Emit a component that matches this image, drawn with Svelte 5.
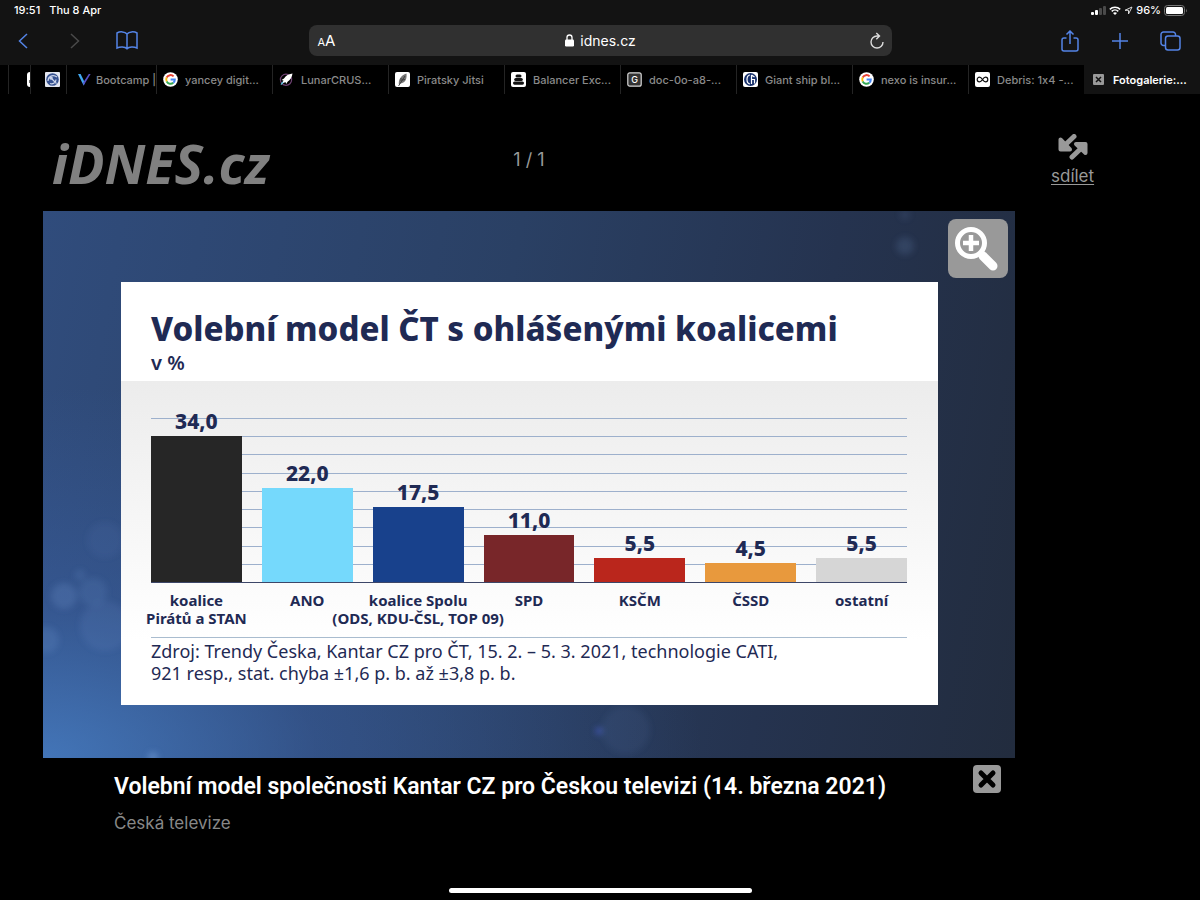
<script lang="ts">
interface Tab {
  icon: string;
  title: string;
  size?: 'sliver' | 'mini' | 'short';
  active?: boolean;
}

interface Party {
  name: string[];
  value: number;
  color: string;
}

const tabs: Tab[] = [
  { icon: 'blank', title: '', size: 'sliver' },
  { icon: 'globe', title: '', size: 'mini' },
  { icon: 'vee', title: 'Bootcamp |', size: 'short' },
  { icon: 'google', title: 'yancey digit...' },
  { icon: 'rocket', title: 'LunarCRUS...' },
  { icon: 'leaf', title: 'Piratsky Jitsi' },
  { icon: 'stack', title: 'Balancer Exc...' },
  { icon: 'letter', title: 'doc-0o-a8-...' },
  { icon: 'guardian', title: 'Giant ship bl...' },
  { icon: 'google', title: 'nexo is insur...' },
  { icon: 'infinity', title: 'Debris: 1x4 -...' },
  { icon: 'close', title: 'Fotogalerie:...', active: true },
];

const parties: Party[] = [
  { name: ['koalice', 'Pirátů a STAN'], value: 34, color: '#262626' },
  { name: ['ANO'], value: 22, color: '#75d9fc' },
  { name: ['koalice Spolu', '(ODS, KDU-ČSL, TOP 09)'], value: 17.5, color: '#18418c' },
  { name: ['SPD'], value: 11, color: '#782629' },
  { name: ['KSČM'], value: 5.5, color: '#ba261c' },
  { name: ['ČSSD'], value: 4.5, color: '#e8993d' },
  { name: ['ostatní'], value: 5.5, color: '#d6d6d6' },
];

const axisMax = 38.3;
const gridLines = 9;

let address = $state('idnes.cz');

const format = (value: number) => value.toFixed(1).replace('.', ',');
</script>

{#snippet favicon(name: string)}
  <svg class="favicon" viewBox="0 0 15 15" aria-hidden="true">
    {#if name === 'blank'}
      <rect width="15" height="15" rx="3" fill="#fff" />
      <path d="M3 8v3" stroke="#333" stroke-width="1.4" />
    {:else if name === 'globe'}
      <rect width="15" height="15" rx="1" fill="#e4e7f0" />
      <circle cx="7.5" cy="7.5" r="6.3" fill="#34508f" />
      <path d="M6 6l5.500 5.500M3 9c0-5 5-7 9-4M5 11.500c3 1 6-1 6-4" fill="none" stroke="#cdd6ea" stroke-width="1.2" />
      <circle cx="6" cy="6" r="1.8" fill="#c7d0e8" />
    {:else if name === 'vee'}
      <path d="M1 2l5.6 11.4L8 11 3.6 2z" fill="#41a8f0" />
      <path d="M6.6 13.4L13.6 2h-1.8L6.2 10.6z" fill="#5750c8" />
    {:else if name === 'google'}
      <circle cx="7.5" cy="7.5" r="7.3" fill="#fff" />
      <g fill="none" stroke-width="2">
        <path d="M10.6 4.4A4.3 4.3 0 0 0 3.7 5.5" stroke="#e84335" />
        <path d="M3.7 5.5a4.3 4.3 0 0 0 0 4" stroke="#fabb05" />
        <path d="M3.7 9.5a4.3 4.3 0 0 0 6.6 1.3" stroke="#34a853" />
        <path d="M10.3 10.8a4.3 4.3 0 0 0 1.5-3.3H7.6" stroke="#4285f4" />
      </g>
    {:else if name === 'rocket'}
      <circle cx="7" cy="7.8" r="5.6" fill="none" stroke="#704274" stroke-width="1.2" />
      <path d="M13.5 1.500C9 2 6.500 4 5 6.500L2.500 8l2 .5L2.500 12l4-2 .6 2L8.800 9.500C11 8 13 5.500 13.500 1.500z" fill="#fff" />
      <path d="M4 10L2 12.600" stroke="#54c0dd" stroke-width="1.3" />
    {:else if name === 'leaf'}
      <rect width="15" height="15" rx="2" fill="#fff" />
      <path d="M4 13C3 8 6 3 11.5 1.500c.5 5-.5 9-6 10z" fill="#777" />
      <path d="M3.500 14L10 4M6 9V6M7 8l3-.5" stroke="#333" stroke-width=".8" />
    {:else if name === 'stack'}
      <rect width="15" height="15" rx="2" fill="#fff" />
      <rect x="4.500" y="2.600" width="6" height="3" rx="1.500" fill="#111" />
      <rect x="3.200" y="6" width="8.600" height="3" rx="1.500" fill="#111" />
      <rect x="2" y="9.500" width="11" height="3.200" rx="1.600" fill="#111" />
    {:else if name === 'letter'}
      <rect x=".8" y=".8" width="13.400" height="13.400" rx="2" fill="#333" stroke="#d8d8d8" stroke-width="1.200" />
      <text class="favicon-letter" x="7.500" y="10.500" text-anchor="middle">G</text>
    {:else if name === 'guardian'}
      <rect width="15" height="15" rx="2" fill="#fff" />
      <circle cx="7.500" cy="7.500" r="6.500" fill="#17306b" />
      <path d="M7 3c-4 .5-4 8.500 0 9M8.500 3v9M8.500 7.500h3v4M8.500 3l3 2" fill="none" stroke="#fff" stroke-width="1.200" />
    {:else if name === 'infinity'}
      <rect width="15" height="15" rx="2" fill="#fff" />
      <path d="M7.500 7.500C6.500 6 5.600 5.200 4.500 5.200a2.300 2.300 0 0 0 0 4.600c1.100 0 2-.8 3-2.300s1.900-2.300 3-2.300a2.300 2.300 0 0 1 0 4.600c-1.100 0-2-.8-3-2.300z" fill="none" stroke="#111" stroke-width="1.200" />
    {:else}
      <rect x="2" y="2" width="11" height="11" rx="1" fill="#999" />
      <path d="M5 5l5 5M10 5l-5 5" stroke="#111" stroke-width="1.500" />
    {/if}
  </svg>
{/snippet}

<div class="screen">
  <header class="browser">
    <div class="status">
      <span>19:51</span>
      <span>Thu 8 Apr</span>
      <div class="status-icons">
        <svg width="15" height="9" viewBox="0 0 15 9" aria-hidden="true">
          <rect y="6" width="3" height="3" rx="1" fill="#fff" />
          <rect x="4" y="4" width="3" height="5" rx="1" fill="#fff" />
          <rect x="8" y="2" width="3" height="7" rx="1" fill="#4a4a4a" />
          <rect x="12" width="3" height="9" rx="1" fill="#4a4a4a" />
        </svg>
        <svg width="12" height="9" viewBox="0 0 12 9" aria-hidden="true">
          <path d="M.8 3.400a7.500 7.500 0 0 1 10.400 0M2.700 5.400a4.700 4.700 0 0 1 6.600 0" fill="none" stroke="#fff" stroke-width="1.500" />
          <path d="M6 9L4 7q2-1.600 4 0z" fill="#fff" />
        </svg>
        <svg width="9" height="9" viewBox="0 0 9 9" aria-hidden="true">
          <path d="M8 1L1 4.300h3.500V8z" fill="none" stroke="#ddd" stroke-width="1" stroke-linejoin="round" />
        </svg>
        <span>96%</span>
        <svg width="24" height="11" viewBox="0 0 24 11" aria-hidden="true">
          <rect x=".5" y=".5" width="20" height="10" rx="3" fill="none" stroke="#777" />
          <rect x="2" y="2" width="17" height="7" rx="1.500" fill="#fff" />
          <path d="M22 3.500q1.500 2 0 4z" fill="#777" />
        </svg>
      </div>
    </div>

    <div class="toolbar">
      <div class="tools">
        <button class="tool" aria-label="Back">
          <svg width="10" height="16" viewBox="0 0 10 16"><path d="M9 1L1.500 8 9 15" /></svg>
        </button>
        <button class="tool muted" aria-label="Forward">
          <svg width="10" height="16" viewBox="0 0 10 16"><path d="M1 1l7.500 7L1 15" /></svg>
        </button>
        <button class="tool" aria-label="Bookmarks">
          <svg width="22" height="19" viewBox="0 0 22 19">
            <path d="M11 3v14.500M11 3C9 .5 4 .2 1 2v15c3-1.500 8-1.500 10 .8 2-2.300 7-2.300 10-.8V2c-3-1.800-8-1.500-10 1z" />
          </svg>
        </button>
      </div>

      <div class="address">
        <button class="reader" aria-label="Page settings"><small>A</small>A</button>
        <label class="location">
          <svg width="9" height="13" viewBox="0 0 9 13" aria-hidden="true">
            <rect y="5.500" width="9" height="7" rx="1.200" fill="#fff" />
            <path d="M2 6V3.500a2.500 2.500 0 0 1 5 0V6" fill="none" stroke="#fff" stroke-width="1.300" />
          </svg>
          <input type="text" aria-label="Address" bind:value={address} />
        </label>
        <button class="reload" aria-label="Reload">
          <svg width="14" height="17" viewBox="0 0 14 17">
            <path d="M7 4a6 6 0 1 0 6 6M7 4h2M6.300 1L9.500 4 6.300 7.200" />
          </svg>
        </button>
      </div>

      <div class="tools end">
        <button class="tool" aria-label="Share">
          <svg width="18" height="22" viewBox="0 0 18 22">
            <path d="M5.500 8H3a2 2 0 0 0-2 2v9a2 2 0 0 0 2 2h12a2 2 0 0 0 2-2v-9a2 2 0 0 0-2-2h-2.500M9 14V1M5.500 4.500L9 1l3.500 3.500" />
          </svg>
        </button>
        <button class="tool" aria-label="New tab">
          <svg width="16" height="16" viewBox="0 0 16 16"><path d="M8 0v16M0 8h16" /></svg>
        </button>
        <button class="tool" aria-label="Show tabs">
          <svg width="21" height="20" viewBox="0 0 21 20">
            <path d="M5.500 14.500H3.500a2.500 2.500 0 0 1-2.500-2.500V3.500A2.500 2.500 0 0 1 3.500 1H13a2.500 2.500 0 0 1 2.500 2.500v1.500" />
            <rect x="5.500" y="5" width="14.500" height="14" rx="2.500" />
          </svg>
        </button>
      </div>
    </div>

    <nav class="tabs" aria-label="Tabs">
      {#each tabs as tab}
        <a href="#tab" class="tab {tab.size ?? ''}" class:active={tab.active} aria-label={tab.title || 'Tab'}>
          {@render favicon(tab.icon)}
          {#if tab.title}<span>{tab.title}</span>{/if}
        </a>
      {/each}
    </nav>
  </header>

  <main class="gallery">
    <div class="top">
      <a class="logo" href="#home">iDNES.cz</a>
      <span class="counter">1 / 1</span>
    </div>
    <a class="share" href="#share">
      <svg width="30" height="26" viewBox="0 0 30 26" aria-hidden="true">
        <g fill="none" stroke="#999" stroke-width="4" stroke-linecap="round" stroke-linejoin="round">
          <path d="M2.500 5.500v10H12z" fill="#999" />
          <path d="M16 2.500L6 12" stroke-width="5" />
          <path d="M18 10h9.500v9z" fill="#999" />
          <path d="M14 23L24 13.500" stroke-width="5" />
        </g>
      </svg>
      <span>sdílet</span>
    </a>

    <figure class="photo">
      <svg class="backdrop" viewBox="0 0 972 547" preserveAspectRatio="none" aria-hidden="true">
        <defs>
          <filter id="soft"><feGaussianBlur stdDeviation="3" /></filter>
        </defs>
        <g fill="#86aee8" filter="url(#soft)">
          <circle cx="21" cy="385" r="13" opacity=".18" />
          <circle cx="50" cy="381" r="14" opacity=".12" />
          <circle cx="62" cy="415" r="25" opacity=".1" />
          <circle cx="3" cy="429" r="13" opacity=".14" />
          <circle cx="62" cy="329" r="18" opacity=".06" />
          <circle cx="37" cy="364" r="5" opacity=".14" />
          <circle cx="583" cy="519" r="24" opacity=".07" />
          <circle cx="862" cy="35" r="9" opacity=".14" />
          <circle cx="862" cy="4" r="5" opacity=".1" />
          <circle cx="110" cy="546" r="5" opacity=".4" />
          <circle cx="556" cy="520" r="3" fill="#4c62d8" opacity=".8" />
        </g>
      </svg>

      <section class="card">
        <div class="card-head">
          <h1>Volební model ČT s ohlášenými koalicemi</h1>
          <p>v %</p>
        </div>
        <div class="card-body">
          <div class="plot">
            <div class="lines">
              {#each Array(gridLines) as _}<i></i>{/each}
            </div>
            {#each parties as party}
              <div class="column">
                <strong>{format(party.value)}</strong>
                <div class="bar" style="height: {(party.value / axisMax) * 100}%; background: {party.color}"></div>
              </div>
            {/each}
          </div>
          <div class="names">
            {#each parties as party}
              <div class="name">
                {#each party.name as line}<span>{line}</span>{/each}
              </div>
            {/each}
          </div>
          <p class="source">
            Zdroj: Trendy Česka, Kantar CZ pro ČT, 15. 2. – 5. 3. 2021, technologie CATI,<br />
            921 resp., stat. chyba ±1,6 p. b. až ±3,8 p. b.
          </p>
        </div>
      </section>

      <button class="zoom" aria-label="Zvětšit">
        <svg width="60" height="59" viewBox="0 0 60 59">
          <path d="M35 37l10 10" stroke-width="9" stroke-linecap="round" />
          <circle cx="23" cy="24" r="13.500" stroke-width="5" />
          <path d="M23 16v16M15 24h16" stroke-width="4.500" />
        </svg>
      </button>
    </figure>

    <div class="caption">
      <div>
        <h2>Volební model společnosti Kantar CZ pro Českou televizi (14. března 2021)</h2>
        <p>Česká televize</p>
      </div>
      <button class="close" aria-label="Zavřít">
        <svg width="28" height="28" viewBox="0 0 28 28">
          <path d="M8 8l12 12M20 8L8 20" />
        </svg>
      </button>
    </div>
  </main>

  <div class="home-indicator"></div>
</div>

<style>
:global(body) {
  background: #000;
}

.screen {
  display: flex;
  flex-direction: column;
  min-height: 100vh;
  font-family: Inter, 'Liberation Sans', sans-serif;
  font-variant-ligatures: no-contextual;
  color: #fff;
  background: #000;
}

button {
  padding: 0;
  font: inherit;
  color: inherit;
  background: none;
  border: 0;
}

a {
  color: inherit;
  text-decoration: none;
}

h1,
h2,
p,
figure {
  margin: 0;
}

svg {
  display: block;
  flex: none;
}

.browser {
  background: #131313;
}

.status {
  display: flex;
  gap: 9px;
  align-items: center;
  height: 20px;
  padding: 0 12px 0 14px;
  font-size: 11px;
  font-weight: 500;
}

.status-icons {
  display: flex;
  gap: 3px;
  align-items: center;
  margin-left: auto;
}

.toolbar {
  display: grid;
  grid-template-columns: 1fr minmax(0, 583px) 1fr;
  align-items: center;
  padding: 5px 9px 9px;
}

.tools {
  display: flex;
  gap: 24px;
}

.tools.end {
  gap: 22px;
  justify-content: flex-end;
  padding-right: 7px;
}

.tool {
  display: grid;
  place-items: center;
  width: 28px;
  height: 28px;
}

.tool svg {
  fill: none;
  stroke: #5484e6;
  stroke-width: 1.5;
}

.tool.muted svg {
  stroke: #4a4a4a;
}

.address {
  display: grid;
  grid-template-columns: 1fr auto 1fr;
  align-items: center;
  height: 31px;
  padding: 0 8px 0 9px;
  background: #303030;
  border-radius: 8px;
}

.reader {
  justify-self: start;
  font-size: 15px;
}

.reader small {
  font-size: 11px;
}

.location {
  display: flex;
  gap: 6px;
  align-items: center;
}

.location input {
  padding: 0;
  font: inherit;
  font-size: 14px;
  line-height: 20px;
  color: #fff;
  field-sizing: content;
  background: none;
  border: 0;
}

.reload {
  justify-self: end;
}

.reload svg {
  fill: none;
  stroke: #ddd;
  stroke-width: 1.4;
}

.tabs {
  display: flex;
  padding-left: 8px;
  background: #000;
}

.tab {
  box-sizing: border-box;
  display: flex;
  flex: 1 1 0;
  gap: 7px;
  align-items: center;
  min-width: 0;
  height: 29px;
  padding-left: 6px;
  overflow: hidden;
  font-size: 11px;
  font-weight: 500;
  color: #8a8a8a;
  white-space: nowrap;
  border-left: 1px solid #242424;
}

.tab.sliver {
  flex: 0 0 22px;
  padding-left: 18px;
}

.tab.mini {
  flex: 0 0 36px;
  padding-left: 14px;
}

.tab.short {
  flex: 0 0 90px;
  gap: 4px;
  padding-left: 10px;
}

.tab.active {
  font-weight: 600;
  color: #fff;
  background: #131313;
  border-color: #131313;
}

.favicon {
  width: 15px;
  height: 15px;
}

.favicon-letter {
  font-size: 9px;
  fill: #fff;
}

.gallery {
  display: grid;
  grid-template-columns: minmax(0, 1fr) 185px;
  padding-left: 43px;
}

.top {
  display: grid;
  grid-template-columns: 1fr auto 1fr;
  align-items: center;
  height: 117px;
  padding: 0 9px;
}

.logo {
  padding-top: 20px;
  font-family: 'Open Sans', sans-serif;
  font-size: 54px;
  font-style: italic;
  font-weight: 700;
  line-height: 60px;
  color: #808080;
}

.counter {
  padding-top: 14px;
  font-size: 18px;
  color: #999;
}

.share {
  display: flex;
  flex-direction: column;
  gap: 5px;
  align-items: center;
  justify-self: start;
  margin-left: 36px;
  padding-top: 40px;
  font-size: 17px;
  line-height: 22px;
  color: #999;
  text-decoration: underline;
  text-underline-offset: 2px;
}

.photo {
  position: relative;
  grid-column: 1;
  padding: 71px 77px 53px 78px;
  background:
    radial-gradient(ellipse at 0 100%, rgb(72 128 200 / 80%), rgb(60 100 170 / 45%) 20%, transparent 48%),
    linear-gradient(100deg, #304c7c, #2a4064 45%, #25334f 75%, #222c3e);
}

.backdrop {
  position: absolute;
  inset: 0;
  width: 100%;
  height: 100%;
}

.card {
  position: relative;
  font-family: 'Noto Sans', sans-serif;
  color: #1f2a54;
  background: #fff;
}

.card-head {
  padding: 26px 30px 5px;
}

.card-head h1 {
  font-size: 33px;
  font-weight: 800;
  line-height: 42px;
}

.card-head p {
  font-size: 20px;
  font-weight: 600;
  line-height: 26px;
}

.card-body {
  padding: 37px 31px 21px 30px;
  background: linear-gradient(#ececec, #fff 80%);
}

.plot,
.names {
  display: grid;
  grid-template-columns: repeat(7, minmax(0, 1fr));
  column-gap: 20px;
}

.plot {
  position: relative;
  height: 164px;
  border-bottom: 1px solid #3c4668;
}

.lines {
  position: absolute;
  inset: 0;
  display: grid;
  grid-template-rows: repeat(9, 1fr);
}

.lines i {
  border-top: 1px solid #9db0cc;
}

.column {
  position: relative;
  display: flex;
  flex-direction: column;
  align-items: center;
  justify-content: flex-end;
  height: 164px;
}

.column strong {
  font-size: 21px;
  font-weight: 800;
  line-height: 29px;
}

.bar {
  flex: none;
  width: 100%;
}

.names {
  padding: 8px 0 10px;
  border-bottom: 1px solid #a9bccf;
}

.name {
  display: flex;
  flex-direction: column;
  align-items: center;
  font-size: 15px;
  font-weight: 700;
  line-height: 18px;
  white-space: nowrap;
}

.source {
  padding-top: 2px;
  font-size: 18px;
  line-height: 22px;
}

.zoom {
  position: absolute;
  top: 8px;
  right: 7px;
  background: #999;
  border-radius: 8px;
}

.zoom svg {
  fill: none;
  stroke: #fff;
}

.caption {
  display: flex;
  grid-column: 1;
  justify-content: space-between;
  padding: 7px 14px 0 71px;
}

.caption h2 {
  padding-top: 7px;
  font-family: Roboto, sans-serif;
  font-size: 23px;
  font-weight: 600;
  line-height: 30px;
}

.caption p {
  padding-top: 10px;
  font-size: 17px;
  line-height: 22px;
  color: #888;
}

.close {
  align-self: start;
  background: #999;
  border-radius: 4px;
}

.close svg {
  fill: none;
  stroke: #000;
  stroke-width: 5;
  stroke-linecap: round;
}

.home-indicator {
  align-self: center;
  width: 303px;
  height: 5px;
  margin: auto 0 7px;
  background: #fff;
  border-radius: 3px;
}
</style>
